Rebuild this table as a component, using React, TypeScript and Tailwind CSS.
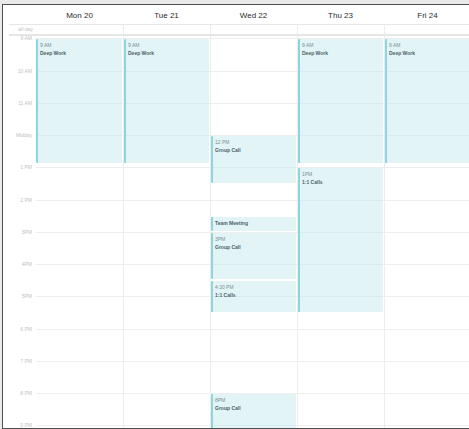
import React from 'react';

const HOUR = 32.26;
const OFFSET = 2.4;

const days = ['Mon 20', 'Tue 21', 'Wed 22', 'Thu 23', 'Fri 24'];
const hours = ['9 AM', '10 AM', '11 AM', 'Midday', '1 PM', '2 PM', '3PM', '4PM', '5PM', '6 PM', '7 PM', '8 PM', '9 PM'];

type CalEvent = { day: number; start: number; end: number; time?: string; title: string };

const events: CalEvent[] = [
  { day: 0, start: 9, end: 12.88, time: '9 AM', title: 'Deep Work' },
  { day: 1, start: 9, end: 12.88, time: '9 AM', title: 'Deep Work' },
  { day: 3, start: 9, end: 12.88, time: '9 AM', title: 'Deep Work' },
  { day: 4, start: 9, end: 12.88, time: '9 AM', title: 'Deep Work' },
  { day: 2, start: 12, end: 13.5, time: '12 PM', title: 'Group Call' },
  { day: 2, start: 14.5, end: 15, title: 'Team Meeting' },
  { day: 2, start: 15, end: 16.5, time: '3PM', title: 'Group Call' },
  { day: 2, start: 16.5, end: 17.5, time: '4:30 PM', title: '1:1 Calls' },
  { day: 2, start: 20, end: 21.5, time: '8PM', title: 'Group Call' },
  { day: 3, start: 13, end: 17.5, time: '1PM', title: '1:1 Calls' },
];

const y = (h: number) => OFFSET + (h - 9) * HOUR;

function EventBlock({ ev }: { ev: CalEvent }) {
  const top = y(ev.start) + 1;
  const height = y(ev.end) - 1 - top;
  return (
    <div
      className="absolute left-0 right-[1px] overflow-hidden rounded-[1px] border-l-2 border-[#8dd6e0] bg-[rgba(183,228,231,0.4)] pl-[2px] pt-[2px] leading-[8px]"
      style={{ top, height }}
    >
      {ev.time && <div className="text-[5px] text-[#7b9197]">{ev.time}</div>}
      <div className="text-[5px] font-bold text-[#4b6268]">{ev.title}</div>
    </div>
  );
}

export default function App() {
  return (
    <div className="h-[429px] w-[469px] overflow-hidden bg-[#e9e9e9] pl-[2px] pt-[4px] font-['Liberation_Sans',Arial,sans-serif]">
      <div className="h-[425px] w-[600px] border-b border-l border-t border-[#4f4f4f] bg-white">
        {/* header */}
        <div className="flex h-[19px] items-center">
          <div className="w-[33px]" />
          {days.map(d => (
            <div key={d} className="w-[87px] pt-[2px] text-center text-[8px] text-[#2c2c2c]">{d}</div>
          ))}
        </div>

        {/* all-day */}
        <div className="ml-[6px] flex h-[12px] border-b-2 border-t border-[#e6e6e6]">
          <div className="w-[27px] pr-[3px] text-right text-[5px] leading-[9px] text-[#bdbdbd]">all-day</div>
          {days.map((d, i) => (
            <div key={d} className={i === 0 ? 'w-[87px]' : 'w-[87px] border-l border-[#ececec]'} />
          ))}
        </div>

        {/* body */}
        <div className="flex h-[392px] overflow-hidden">
          <div className="w-[33px] pr-[4px]" style={{ paddingTop: OFFSET }}>
            {hours.map(h => (
              <div key={h} className="relative text-right text-[5px] text-[#c2c2c2]" style={{ height: HOUR }}>
                <span className="absolute right-0 top-0 -translate-y-1/2 leading-[6px]">{h}</span>
              </div>
            ))}
          </div>
          {days.map((d, i) => (
            <div key={d} className={i === 0 ? 'relative w-[87px] shrink-0' : 'relative w-[87px] shrink-0 border-l border-[#ececec]'}>
              <div style={{ paddingTop: OFFSET }}>
                {hours.map(h => (
                  <div key={h} className="border-t border-[#eeeeee]" style={{ height: HOUR }} />
                ))}
              </div>
              {events.filter(e => e.day === i).map((e, k) => (
                <EventBlock key={k} ev={e} />
              ))}
            </div>
          ))}
        </div>
      </div>
    </div>
  );
}
